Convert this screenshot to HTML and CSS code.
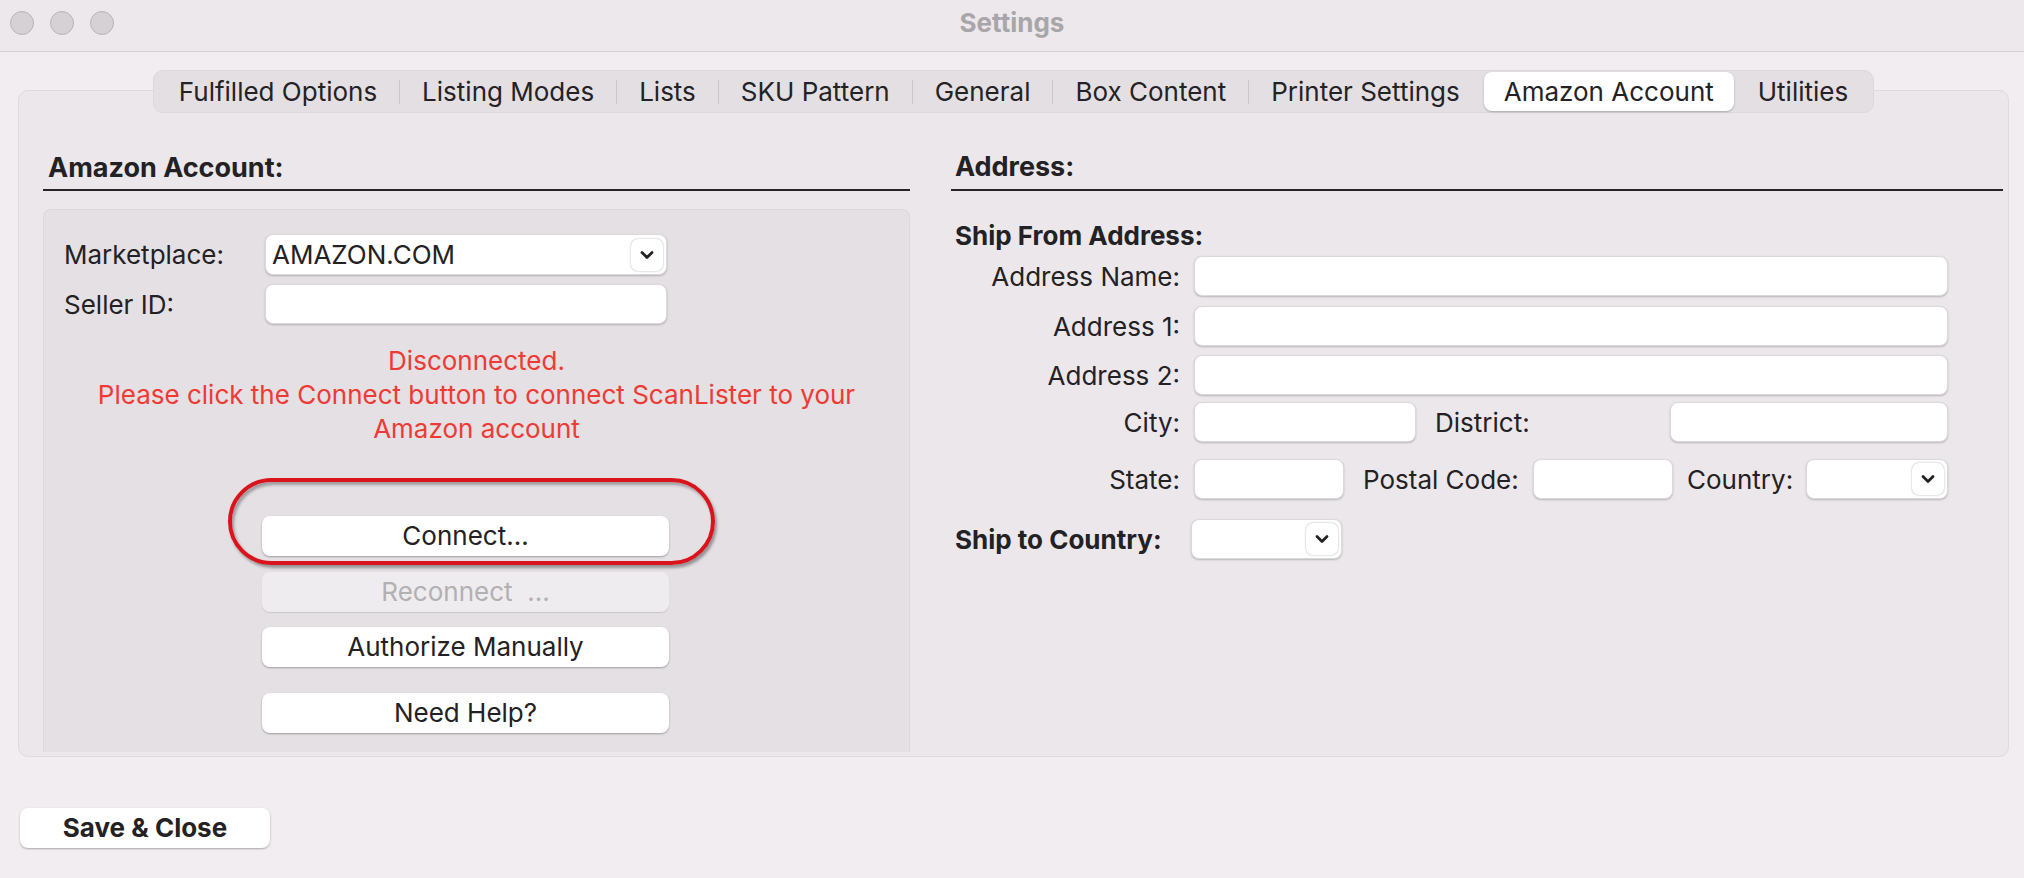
FILE: index.html
```html
<!DOCTYPE html>
<html lang="en">
<head>
    <meta charset="UTF-8">
    <title>Settings</title>
    <link rel="stylesheet" href="styles.css">
</head>
<body>
    <div class="titlebar">
        <div class="lights">
            <span class="light"></span>
            <span class="light"></span>
            <span class="light"></span>
        </div>
        <div class="title">Settings</div>
        <div></div>
    </div>

    <div class="content">
        <div class="tabs-wrap">
            <div class="tabs">
                <div class="tab">Fulfilled Options</div>
                <span class="sep"></span>
                <div class="tab">Listing Modes</div>
                <span class="sep"></span>
                <div class="tab">Lists</div>
                <span class="sep"></span>
                <div class="tab">SKU Pattern</div>
                <span class="sep"></span>
                <div class="tab">General</div>
                <span class="sep"></span>
                <div class="tab">Box Content</div>
                <span class="sep"></span>
                <div class="tab">Printer Settings</div>
                <div class="tab active">Amazon Account</div>
                <div class="tab">Utilities</div>
            </div>
        </div>

        <div class="group">
            <!-- 左侧 -->
            <div class="col-left">
                <div class="section-head">Amazon Account:</div>
                <div class="panel">
                    <div class="form-row">
                        <div class="lbl">Marketplace:</div>
                        <div class="select market">
                            <span class="select-text">AMAZON.COM</span>
                            <span class="chev"><svg width="14" height="10" viewBox="0 0 14 10"><path d="M2 2.5 L7 7.5 L12 2.5" fill="none" stroke="#222" stroke-width="2.8" stroke-linecap="round" stroke-linejoin="round"/></svg></span>
                        </div>
                    </div>
                    <div class="form-row row2">
                        <div class="lbl">Seller ID:</div>
                        <div class="input market"></div>
                    </div>
                    <div class="status">
                        Disconnected.<br>
                        Please click the Connect button to connect ScanLister to your<br>
                        Amazon account
                    </div>
                    <div class="btns">
                        <div class="btn-hl">
                            <div class="btn">Connect...</div>
                            <span class="ring"></span>
                        </div>
                        <div class="btn disabled">Reconnect &nbsp;...</div>
                        <div class="btn b-auth">Authorize Manually</div>
                        <div class="btn b-help">Need Help?</div>
                    </div>
                </div>
            </div>

            <!-- 右侧 -->
            <div class="col-right">
                <div class="section-head">Address:</div>
                <div class="sub-head">Ship From Address:</div>
                <div class="addr-row r1">
                    <div class="albl">Address Name:</div>
                    <div class="input grow"></div>
                </div>
                <div class="addr-row r2">
                    <div class="albl">Address 1:</div>
                    <div class="input grow"></div>
                </div>
                <div class="addr-row r3">
                    <div class="albl">Address 2:</div>
                    <div class="input grow"></div>
                </div>
                <div class="addr-row r4">
                    <div class="albl">City:</div>
                    <div class="input w-city"></div>
                    <div class="ilbl district">District:</div>
                    <div class="input w-district"></div>
                </div>
                <div class="addr-row r5">
                    <div class="albl">State:</div>
                    <div class="input w-state"></div>
                    <div class="ilbl postal">Postal Code:</div>
                    <div class="input w-postal"></div>
                    <div class="ilbl country">Country:</div>
                    <div class="select w-country">
                        <span class="select-text"></span>
                        <span class="chev"><svg width="14" height="10" viewBox="0 0 14 10"><path d="M2 2.5 L7 7.5 L12 2.5" fill="none" stroke="#222" stroke-width="2.8" stroke-linecap="round" stroke-linejoin="round"/></svg></span>
                    </div>
                </div>
                <div class="addr-row r6">
                    <div class="bold-lbl">Ship to Country:</div>
                    <div class="select w-ship">
                        <span class="select-text"></span>
                        <span class="chev"><svg width="14" height="10" viewBox="0 0 14 10"><path d="M2 2.5 L7 7.5 L12 2.5" fill="none" stroke="#222" stroke-width="2.8" stroke-linecap="round" stroke-linejoin="round"/></svg></span>
                    </div>
                </div>
            </div>
        </div>

        <div class="btn save">Save &amp; Close</div>
    </div>
</body>
</html>
```

FILE: styles.css
```css
*{
    padding: 0;
    margin: 0;
    box-sizing: border-box;
}
body{
    width: 2024px;
    height: 878px;
    overflow: hidden;
    background-color: #f1edf1;
    font-family: Inter, "Liberation Sans", sans-serif;
    font-size: 26px;
    color: #232123;
}

/* 标题栏 */
.titlebar{
    height: 52px;
    background-color: #ece8ec;
    border-bottom: 1px solid #d3cfd3;
    display: grid;
    grid-template-columns: 1fr auto 1fr;
    align-items: center;
    padding-bottom: 6px;
}
.lights{
    display: flex;
    gap: 16px;
    padding-left: 10px;
}
.light{
    width: 24px;
    height: 24px;
    border-radius: 50%;
    background-color: #d5d1d5;
    border: 1px solid #b8b5b8;
}
.title{
    font-weight: bold;
    color: #a9a6a9;
    font-size: 26px;
}

.content{
    padding: 18px 15px 0 18px;
}

/* 选项卡 */
.tabs-wrap{
    display: flex;
    justify-content: center;
    position: relative;
    z-index: 1;
}
.tabs{
    height: 43px;
    background-color: #e3dfe3;
    border: 1px solid #dcd8dc;
    border-radius: 10px;
    display: flex;
    align-items: center;
    padding: 0 3px;
}
.tab{
    padding: 0 22px;
    height: 39px;
    line-height: 39px;
    color: #242224;
}
.tab.active{
    background-color: #fff;
    border-radius: 8px;
    box-shadow: 0 1px 2px rgba(0,0,0,.25);
    padding: 0 20px;
    margin: 0 2px;
}
.sep{
    width: 1px;
    height: 24px;
    background-color: #cbc7cb;
}

.group{
    margin-top: -23px;
    height: 667px;
    background-color: #ebe7eb;
    border: 1px solid #dedade;
    border-radius: 10px;
    padding: 62px 5px 4px 24px;
    display: flex;
    gap: 41px;
}
.col-left{
    width: 867px;
    display: flex;
    flex-direction: column;
}
.col-right{
    width: 1052px;
}
.section-head{
    font-weight: bold;
    font-size: 27px;
    line-height: 30px;
    padding: 0 5px 6px;
    border-bottom: 2px solid #262426;
}
.col-right .section-head{
    padding-left: 4px;
    padding-bottom: 9px;
    line-height: 27px;
}

/* 左侧面板 */
.panel{
    margin-top: 18px;
    flex: 1;
    background-color: #e4e0e4;
    border: 1px solid #dcd8dc;
    border-bottom: none;
    border-radius: 8px 8px 0 0;
    padding: 24px 20px 0;
}
.form-row{
    display: flex;
    align-items: center;
    height: 41px;
}
.form-row.row2{
    margin-top: 9px;
    height: 40px;
}
.lbl{
    width: 201px;
}
.input, .select{
    background-color: #fff;
    border: 1px solid #dcd9dc;
    border-radius: 8px;
    box-shadow: 0 1px 2px rgba(0,0,0,.22);
    height: 40px;
}
.market{
    width: 402px;
    height: 41px;
}
.form-row.row2 .market{
    height: 40px;
}
.select{
    display: flex;
    align-items: center;
    justify-content: space-between;
    padding: 0 3px 0 6px;
}
.select-text{
    font-size: 26px;
}
.chev{
    width: 32px;
    height: 32px;
    border-radius: 7px;
    background-color: #fff;
    box-shadow: 0 0 2px rgba(0,0,0,.35);
    display: flex;
    align-items: center;
    justify-content: center;
}
.status{
    margin-top: 20px;
    text-align: center;
    color: #ee3a33;
    line-height: 34px;
}
.btns{
    margin: 70px 0 0 198px;
    width: 407px;
}
.btn{
    height: 40px;
    line-height: 40px;
    text-align: center;
    background-color: #fff;
    border-radius: 8px;
    box-shadow: 0 1px 2px rgba(0,0,0,.3);
    color: #232123;
}
.btn-hl{
    position: relative;
}
.ring{
    position: absolute;
    top: -38px;
    left: -34px;
    right: -46px;
    bottom: -9px;
    border: 4px solid #da141c;
    border-radius: 46px;
    box-shadow: 2px 3px 3px rgba(0,0,0,.35), inset 2px 3px 3px rgba(0,0,0,.3);
}
.btn.disabled{
    margin-top: 16px;
    background-color: #eeecee;
    color: #b3b0b3;
    box-shadow: 0 1px 1px rgba(0,0,0,.12);
}
.b-auth{
    margin-top: 15px;
}
.b-help{
    margin-top: 26px;
}

/* 右侧地址 */
.sub-head{
    margin-top: 30px;
    font-weight: bold;
    line-height: 30px;
    padding-left: 4px;
}
.addr-row{
    display: flex;
    align-items: center;
    width: 997px;
    height: 40px;
}
.r1{ margin-top: 5px; }
.r2{ margin-top: 10px; }
.r3{ margin-top: 9px; }
.r4{ margin-top: 7px; }
.r5{ margin-top: 17px; }
.r6{ margin-top: 20px; }
.albl{
    width: 229px;
    text-align: right;
    margin-right: 14px;
}
.grow{
    flex: 1;
}
.w-city{ width: 222px; }
.district{
    margin-left: 19px;
    flex: 1;
}
.w-district{ width: 278px; }
.w-state{ width: 150px; }
.postal{
    margin-left: 19px;
    width: 170px;
}
.w-postal{ width: 140px; }
.country{
    margin-left: 14px;
    width: 119px;
}
.w-country{ width: 142px; }
.bold-lbl{
    width: 240px;
    font-weight: bold;
    padding-left: 4px;
}
.w-ship{ width: 151px; }

.save{
    margin: 51px 0 0 2px;
    width: 250px;
    font-weight: bold;
}
```
